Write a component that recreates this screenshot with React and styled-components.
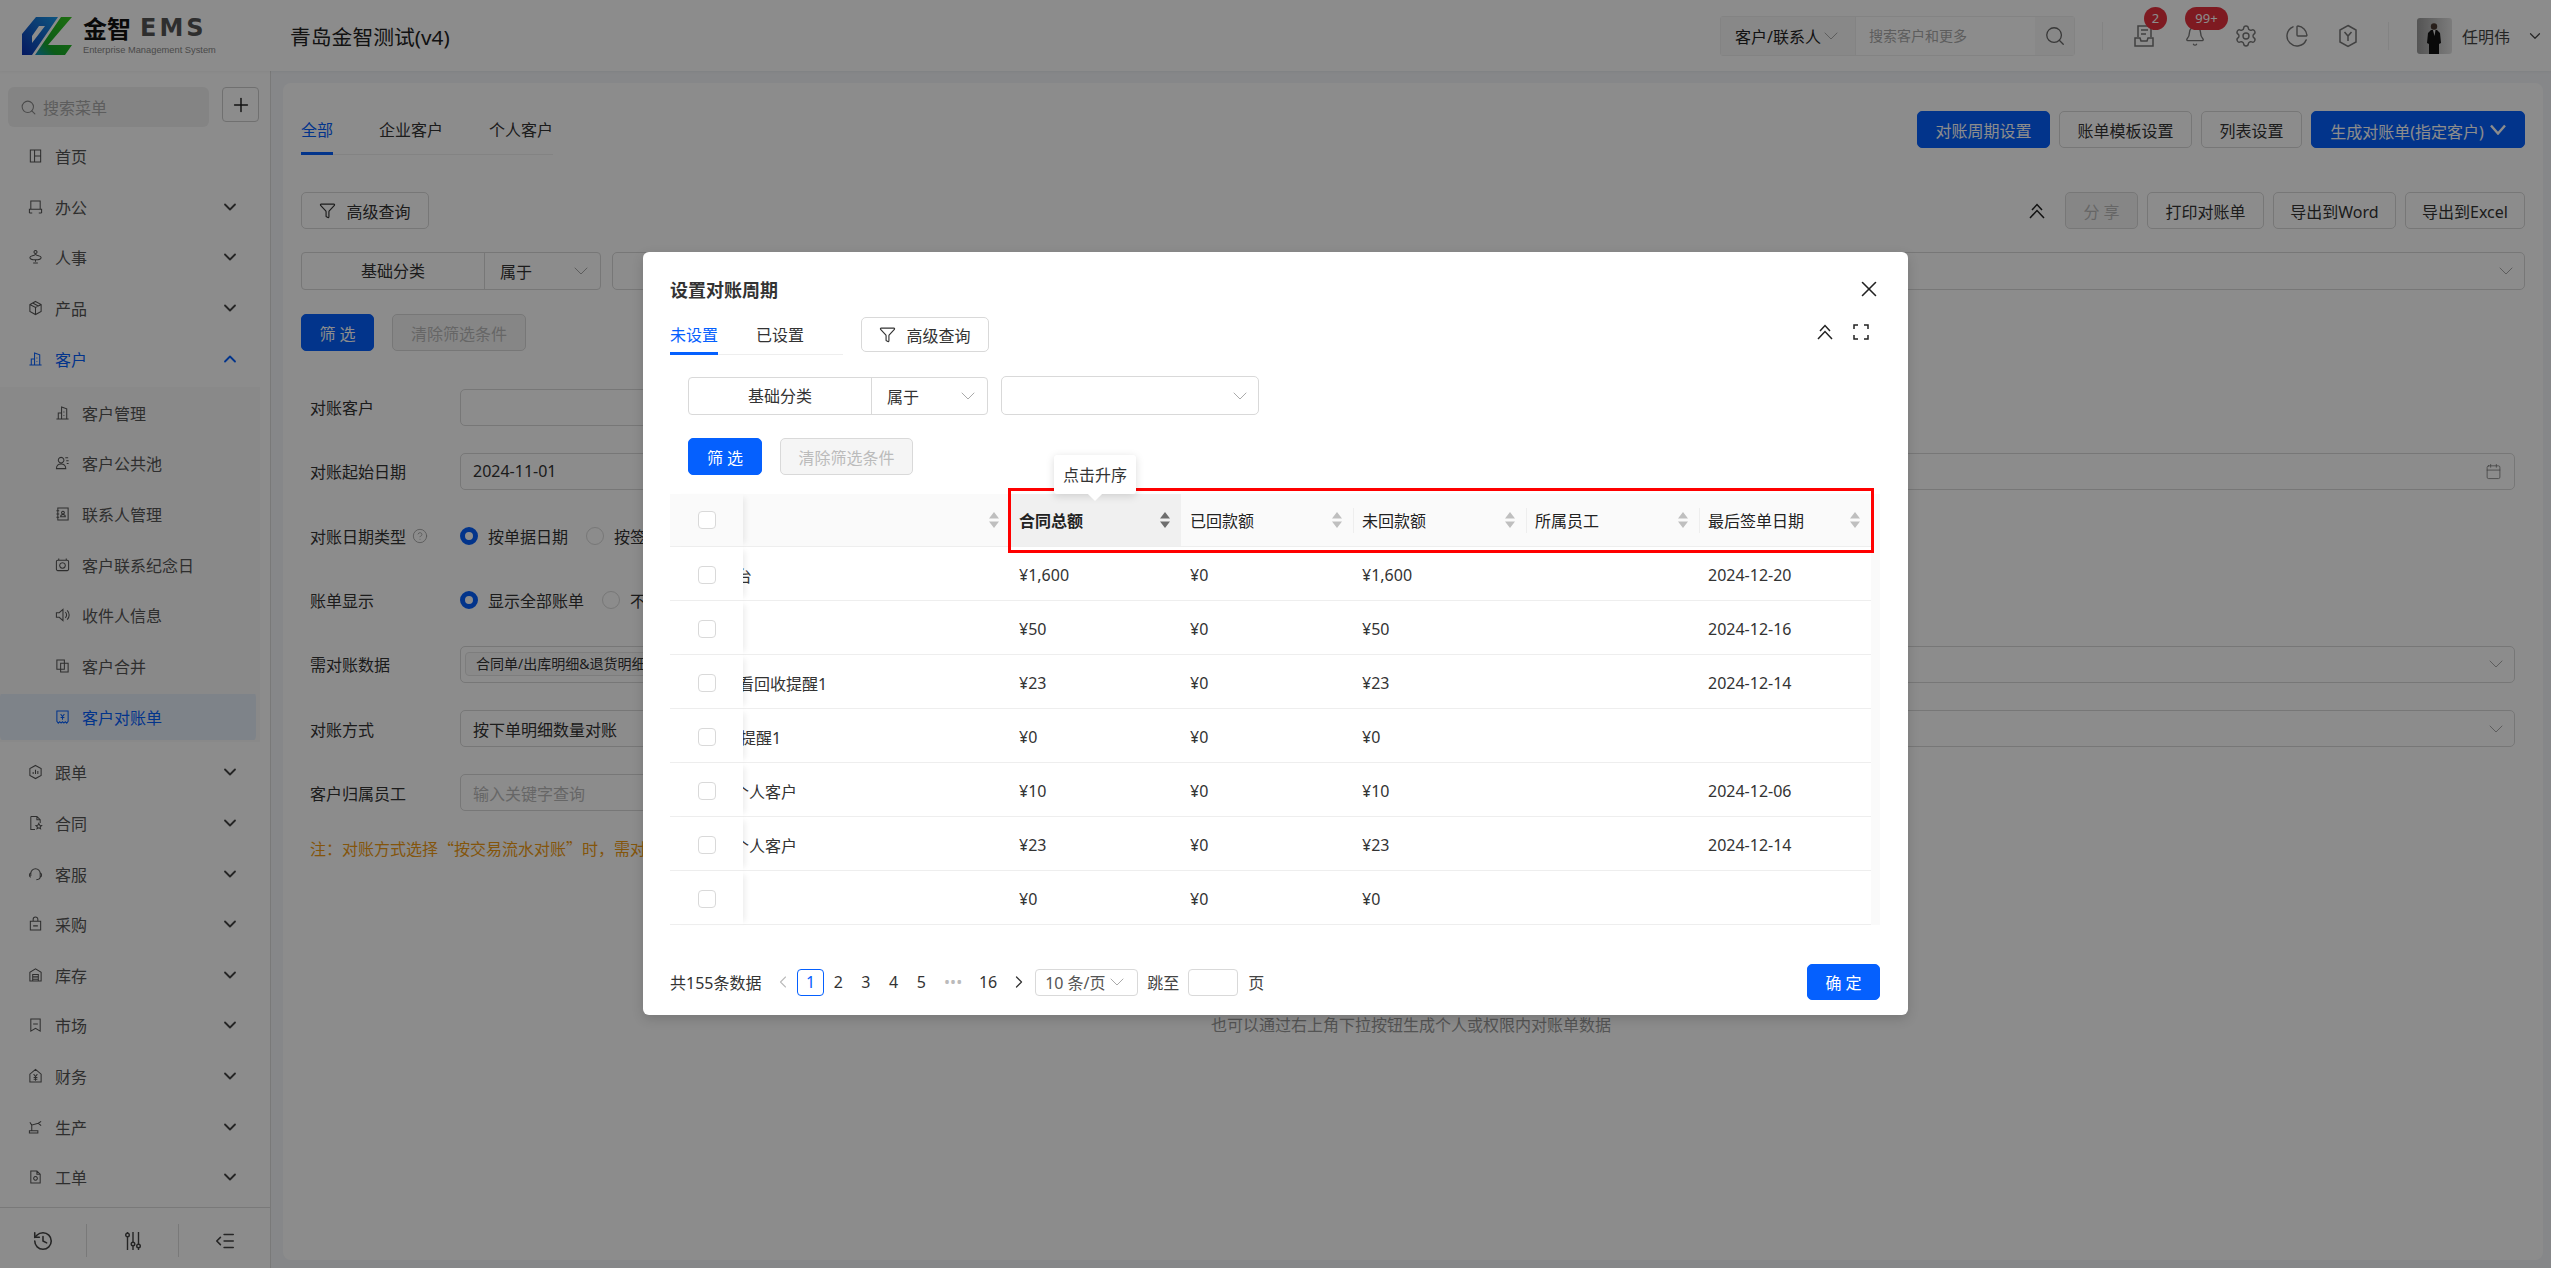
import React from 'react';
import styled, { createGlobalStyle } from 'styled-components';
import {
  Bell,
  Calendar,
  ChartPie,
  ChevronDown,
  ChevronLeft,
  ChevronRight,
  ChevronUp,
  CircleHelp,
  Funnel,
  History,
  IndentDecrease,
  Plus,
  Search,
  Settings,
  X,
} from 'lucide-react';

const BLUE = '#0560fe';
const FONT = '"Noto Sans", "Noto Sans CJK SC", sans-serif';

const GlobalStyle = createGlobalStyle`
  html, body {
    margin: 0;
    height: 100%;
    overflow: hidden;
    background: #fff;
    font-family: ${FONT};
    font-size: 16px;
    color: #333;
  }
  * { box-sizing: border-box; }
`;

const Page = styled.div`
  position: relative;
  width: 100%;
  height: 100vh;
  display: flex;
  flex-direction: column;
  overflow: hidden;
`;

/* top bar */
const Header = styled.header`
  height: 71px;
  flex: none;
  display: flex;
  align-items: center;
  padding-right: 7px;
  background: #fff;
  box-shadow: 0 1px 3px rgba(0, 0, 0, 0.05);
  position: relative;
  z-index: 1;
`;

const Logo = styled.div`
  width: 290px;
  flex: none;
  display: flex;
  padding-left: 22px;
  align-items: center;
  gap: 11px;
`;

const LogoText = styled.div`
  display: flex;
  flex-direction: column;
  gap: 4px;
`;

const LogoName = styled.div`
  display: flex;
  align-items: center;
  gap: 9px;
  height: 24px;
`;

const LogoCn = styled.span`
  font-family: "Noto Sans CJK SC", sans-serif;
  font-weight: 700;
  font-size: 24px;
  color: #111;
`;

const LogoEn = styled.span`
  font-family: "DejaVu Sans", sans-serif;
  font-weight: 700;
  font-size: 24px;
  letter-spacing: 3px;
  color: #555;
`;

const LogoSub = styled.div`
  font-family: "Liberation Sans", sans-serif;
  font-size: 9.3px;
  line-height: 12px;
  color: #888;
  white-space: nowrap;
`;

const CompanyTitle = styled.div`
  font-size: 20.8px;
  color: #222;
  flex: 1;
`;

const GlobalSearch = styled.div`
  width: 355px;
  height: 40px;
  display: flex;
  border: 1px solid #eee;
  border-radius: 3px;
`;

const SearchType = styled.div`
  width: 135px;
  display: flex;
  align-items: center;
  gap: 1px;
  padding-left: 14px;
  background: #f7f7f7;
  border-right: 1px solid #eee;
  color: #222;
  white-space: nowrap;
`;

const SearchHolder = styled.div`
  flex: 1;
  padding-left: 13px;
  font-size: 14px;
  line-height: 38px;
  color: #aaa;
`;

const SearchBtn = styled.div`
  width: 39px;
  display: flex;
  align-items: center;
  justify-content: center;
  background: #f7f7f7;
  color: #666;
`;

const VLine = styled.div`
  width: 1px;
  height: 28px;
  background: #eee;
  flex: none;
  margin: ${(p) => p.$margin};
`;

const HeadIcon = styled.div`
  position: relative;
  width: 51px;
  height: 40px;
  display: flex;
  align-items: center;
  justify-content: center;
  color: #777;
`;

const Badge = styled.span`
  position: absolute;
  top: -9px;
  left: ${(p) => p.$left}px;
  min-width: ${(p) => p.$w}px;
  height: 23px;
  border-radius: 12px;
  background: #e5303d;
  color: #fff;
  font-size: 13px;
  line-height: 23px;
  text-align: center;
`;

const Avatar = styled.svg`
  width: 35px;
  height: 36px;
  border-radius: 3px;
  flex: none;
`;

const UserName = styled.div`
  margin-left: 10px;
  width: 64px;
  color: #444;
`;

/* left menu */
const Body = styled.div`
  flex: 1;
  display: flex;
  min-height: 0;
`;

const Sidebar = styled.aside`
  width: 271px;
  flex: none;
  display: flex;
  flex-direction: column;
  border-right: 1px solid #dcdcdc;
  background: #fff;
`;

const MenuSearchRow = styled.div`
  display: flex;
  gap: 13px;
  padding: 16px 0 4px 8px;
  align-items: flex-start;
`;

const MenuSearch = styled.div`
  width: 201px;
  height: 40px;
  border-radius: 6px;
  background: #f1f1f1;
  display: flex;
  align-items: center;
  gap: 6px;
  padding-left: 12px;
  color: #aaa;
`;

const AddBtn = styled.div`
  width: 37px;
  height: 35px;
  border: 1px solid #ccc;
  border-radius: 4px;
  display: flex;
  align-items: center;
  justify-content: center;
  color: #222;
`;

const MenuList = styled.nav`
  flex: 1;
  overflow: hidden;
`;

const MenuRow = styled.div`
  height: 50.6px;
  display: flex;
  align-items: center;
  padding: 0 30px 0 28px;
  gap: 12px;
  color: ${(p) => (p.$open ? BLUE : '#555')};
`;

const MenuLabel = styled.span`
  flex: 1;
`;

const Caret = styled.span`
  display: flex;
  color: ${(p) => (p.$open ? BLUE : '#444')};
`;

const SubMenu = styled.div`
  width: 260px;
  margin: 3.4px 0 5px;
  background: #f9f9f9;
`;

const SubRow = styled.div`
  height: 50.7px;
  display: flex;
  align-items: center;
  gap: 12px;
  padding-left: 55px;
  width: 256px;
  border-radius: 6px;
  color: ${(p) => (p.$active ? BLUE : '#555')};
  background: ${(p) =>
    p.$active ? 'linear-gradient(transparent 0 3px, #e6effa 3px 49px, transparent 49px)' : 'none'};
`;

const IconSvg = styled.svg`
  width: 15px;
  height: 16px;
  flex: none;
  fill: none;
  stroke: currentColor;
  stroke-width: 1.1;
`;

const SideFooter = styled.div`
  height: 61px;
  flex: none;
  display: grid;
  grid-template-columns: 87px 92px 1fr;
  align-items: center;
  border-top: 1px solid #ddd;
`;

const FootTool = styled.div`
  height: 33px;
  margin-top: 5px;
  display: flex;
  align-items: center;
  justify-content: center;
  color: #444;
  border-right: ${(p) => (p.$last ? 'none' : '1px solid #ddd')};
`;

/* page behind the dialog */
const Main = styled.main`
  flex: 1;
  min-width: 0;
  background: #f4f6fa;
  padding: 12px 8px 8px 12px;
`;

const Card = styled.section`
  height: 100%;
  background: #fff;
  border-radius: 8px;
  padding: 28px 18px 0;
  position: relative;
`;

const TopRow = styled.div`
  display: flex;
  justify-content: space-between;
  align-items: flex-start;
`;

const Tabs = styled.div`
  display: flex;
  gap: ${(p) => p.$gap}px;
  height: ${(p) => p.$h}px;
  width: ${(p) => p.$w}px;
  border-bottom: 1px solid #eee;
`;

const Tab = styled.div`
  height: calc(100% + 1px);
  line-height: ${(p) => p.$line}px;
  white-space: nowrap;
  color: ${(p) => (p.$active ? BLUE : '#333')};
  border-bottom: 3px solid ${(p) => (p.$active ? BLUE : 'transparent')};
`;

const ToolGroup = styled.div`
  display: flex;
  align-items: center;
  gap: 9px;
`;

const Button = styled.div`
  height: ${(p) => p.$h || 37}px;
  width: ${(p) => p.$w}px;
  flex: none;
  display: flex;
  align-items: center;
  justify-content: center;
  gap: 6px;
  border-radius: 5px;
  white-space: nowrap;
  border: 1px solid ${(p) => (p.$primary ? BLUE : '#d9d9d9')};
  background: ${(p) => (p.$primary ? BLUE : p.$disabled ? '#f5f5f5' : '#fff')};
  color: ${(p) => (p.$primary ? '#fff' : p.$disabled ? '#bbb' : '#333')};
`;

const DropLabel = styled.span`
  margin-top: 3px;
`;

const DropArrow = styled.svg`
  flex: none;
  fill: none;
  stroke: #fff;
  stroke-width: 2.4;
`;

const ActionRow = styled.div`
  margin-top: ${(p) => p.$top}px;
  display: flex;
  justify-content: space-between;
  align-items: center;
`;

const ButtonPair = styled.div`
  display: flex;
  gap: 18px;
  margin-top: ${(p) => p.$top}px;
`;

const CollapseIcon = styled.div`
  display: flex;
  width: 26px;
  margin-right: 6px;
  justify-content: center;
  color: #222;
`;

const FilterRow = styled.div`
  display: flex;
  gap: 11px;
  margin-top: ${(p) => p.$top}px;
  align-items: center;
`;

const FilterField = styled.div`
  display: flex;
  flex: none;
  height: 38px;
  border: 1px solid #d9d9d9;
  border-radius: 4px;
`;

const FieldName = styled.div`
  width: 183px;
  text-align: center;
  line-height: 36px;
  border-right: 1px solid #d9d9d9;
`;

const FieldOp = styled.div`
  width: 115px;
  padding: 0 10px 0 15px;
  display: flex;
  align-items: center;
  justify-content: space-between;
  color: #333;
`;

const Select = styled.div`
  flex: ${(p) => (p.$w ? 'none' : 1)};
  width: ${(p) => (p.$w ? `${p.$w}px` : 'auto')};
  height: ${(p) => p.$h || 38}px;
  border: 1px solid #d9d9d9;
  border-radius: 5px;
  padding: 0 9px;
  display: flex;
  align-items: center;
  justify-content: space-between;
  color: #bbb;
`;

const Form = styled.div`
  margin-top: 24px;
  padding: 0 10px 0 9px;
`;

const FormRow = styled.div`
  height: 64.3px;
  display: flex;
  align-items: center;
`;

const FormLabel = styled.div`
  width: 150px;
  flex: none;
  display: flex;
  align-items: center;
  gap: 6px;
  color: #333;
`;

const HelpMark = styled.span`
  display: flex;
  color: #999;
`;

const FormBox = styled.div`
  flex: ${(p) => (p.$w ? 'none' : 1)};
  width: ${(p) => (p.$w ? `${p.$w}px` : 'auto')};
  height: ${(p) => p.$h || 37}px;
  border: 1px solid #d9d9d9;
  border-radius: 5px;
  padding: 0 ${(p) => p.$pad ?? 12}px 0 ${(p) => p.$padLeft ?? 12}px;
  display: flex;
  align-items: center;
  justify-content: space-between;
  color: ${(p) => (p.$holder ? '#bbb' : '#333')};
  white-space: nowrap;
  overflow: hidden;
`;

const ChevronGrey = styled.span`
  display: flex;
  margin: 0 -3px;
  color: #aaa;
`;

const Tag = styled.span`
  height: 24px;
  padding: 0 10px;
  border: 1px solid #e4e4e4;
  border-radius: 4px;
  background: #fafafa;
  font-size: 14px;
  line-height: 22px;
`;

const RadioGroup = styled.div`
  display: flex;
  align-items: center;
  gap: 10px;
`;

const Radio = styled.span`
  width: 18px;
  height: 18px;
  flex: none;
  border-radius: 50%;
  background: #fff;
  border: ${(p) => (p.$on ? `5px solid ${BLUE}` : '1px solid #d9d9d9')};
`;

const RadioText = styled.span`
  margin-right: ${(p) => p.$gap}px;
  white-space: nowrap;
`;

const Note = styled.div`
  margin: 11px 0 0 9px;
  font-family: "Noto Sans CJK SC", sans-serif;
  line-height: 24px;
  color: #f09b14;
`;

const EmptyHint = styled.div`
  position: absolute;
  left: 928px;
  top: 930px;
  line-height: 24px;
  color: #999;
  white-space: nowrap;
`;

/* dialog */
const Mask = styled.div`
  position: absolute;
  inset: 0;
  z-index: 10;
  background: rgba(0, 0, 0, 0.45);
  display: flex;
  justify-content: center;
  align-items: flex-start;
  padding-top: 252px;
`;

const Modal = styled.div`
  position: relative;
  width: 1265px;
  height: 763px;
  padding: 24px 28px 23px 27px;
  background: #fff;
  border-radius: 6px;
  box-shadow: 0 4px 12px rgba(0, 0, 0, 0.15);
`;

const ModalTitle = styled.div`
  font-size: 18px;
  font-weight: 700;
  line-height: 28px;
  color: #333;
`;

const CloseBtn = styled.div`
  position: absolute;
  top: 24px;
  right: 26px;
  display: flex;
  color: #222;
`;

const ModalTabRow = styled.div`
  margin-top: 13px;
  display: flex;
  align-items: flex-start;
  gap: 18px;
`;

const ModalTools = styled.div`
  margin-left: auto;
  margin-right: 11px;
  margin-top: 7px;
  display: flex;
  gap: 20px;
  color: #222;
`;

const Indented = styled.div`
  padding-left: 18px;
`;

const ModalFilter = styled.div`
  margin-top: 21px;
  display: flex;
  gap: 13px;
  align-items: center;
`;

const TableWrap = styled.div`
  position: relative;
  margin-top: 19px;
  padding-bottom: 8px;
`;

const Row = styled.div`
  display: grid;
  grid-template-columns: 73px 267px 171px 172px 173px 173px 172px 9px;
  height: ${(p) => (p.$head ? 53 : 54)}px;
`;

const HeadCell = styled.div`
  position: relative;
  display: flex;
  align-items: center;
  justify-content: space-between;
  padding: 0 11px 0 9px;
  background: ${(p) => (p.$sorted ? '#f0f0f0' : '#fafafa')};
  border-bottom: 1px solid #eee;
  font-weight: ${(p) => (p.$sorted ? 700 : 400)};
  color: #222;

  &::before {
    content: '';
    display: ${(p) => (p.$sep ? 'block' : 'none')};
    position: absolute;
    left: 0;
    top: 14px;
    height: 25px;
    width: 1px;
    background: #eee;
  }
`;

const Cell = styled.div`
  display: flex;
  align-items: center;
  padding: 3px 9px 0;
  border-bottom: 1px solid #eee;
  color: #333;
  white-space: nowrap;
  overflow: hidden;
`;

const CheckCell = styled.div`
  position: relative;
  z-index: 1;
  display: flex;
  align-items: center;
  padding: ${(p) => (p.$head ? 0 : 3)}px 0 0 28px;
  background: ${(p) => (p.$head ? '#fafafa' : '#fff')};
  border-bottom: 1px solid #eee;
  box-shadow: 6px 0 6px -4px rgba(0, 0, 0, 0.08);
`;

const Check = styled.span`
  width: 18px;
  height: 18px;
  border: 1px solid #d9d9d9;
  border-radius: 4px;
  background: #fff;
`;

const NameText = styled.span`
  margin-left: ${(p) => p.$shift}px;
`;

const NameCell = styled(Cell)`
  padding-left: 0;
  padding-right: 0;
`;

const Gutter = styled.div`
  background: #fafafa;
`;

const LeftShade = styled.div`
  height: 8px;
  width: 73px;
  box-shadow: 6px 0 6px -4px rgba(0, 0, 0, 0.08);
`;

const SortSvg = styled.svg`
  width: 10px;
  height: 16px;
  flex: none;
  fill: ${(p) => (p.$on ? '#6e6e6e' : '#bfbfbf')};
`;

const RedBox = styled.div`
  position: absolute;
  left: 338px;
  top: -6px;
  width: 866px;
  height: 65px;
  border: 3px solid #f00;
  z-index: 2;
`;

const Tooltip = styled.div`
  position: absolute;
  left: 384px;
  top: -39px;
  width: 82px;
  height: 39px;
  z-index: 3;
  background: #fff;
  border-radius: 3px;
  box-shadow: 0 2px 8px rgba(0, 0, 0, 0.15);
  text-align: center;
  line-height: 41px;
  color: #333;

  &::after {
    content: '';
    position: absolute;
    left: 36px;
    bottom: -5px;
    width: 10px;
    height: 10px;
    background: #fff;
    transform: rotate(45deg);
  }
`;

const Footer = styled.div`
  margin-top: 23px;
  height: 36px;
  display: flex;
  align-items: center;
`;

const Total = styled.span`
  width: 99px;
  white-space: nowrap;
  flex: none;
`;

const PageItem = styled.span`
  width: ${(p) => p.$w || 27.7}px;
  height: 27px;
  flex: none;
  display: flex;
  align-items: center;
  justify-content: center;
  border: 1px solid ${(p) => (p.$active ? BLUE : 'transparent')};
  border-radius: 4px;
  color: ${(p) => (p.$active ? BLUE : p.$muted ? '#bbb' : '#333')};
`;

const PageSize = styled.div`
  width: 103px;
  height: 27px;
  margin-left: 2px;
  border: 1px solid #d9d9d9;
  border-radius: 4px;
  padding: 0 11px 0 9px;
  display: flex;
  align-items: center;
  justify-content: space-between;
  color: #555;
  white-space: nowrap;
`;

const JumpText = styled.span`
  margin-left: ${(p) => p.$left}px;
  white-space: nowrap;
  color: #444;
`;

const JumpInput = styled.div`
  width: 50px;
  height: 27px;
  margin-left: 9px;
  border: 1px solid #d9d9d9;
  border-radius: 4px;
`;

const OkWrap = styled.div`
  margin-left: auto;
`;

const DIALOG_ROWS = [
  { name: '平台', shift: -23, total: '¥1,600', back: '¥0', left: '¥1,600', date: '2024-12-20' },
  { name: '', shift: 0, total: '¥50', back: '¥0', left: '¥50', date: '2024-12-16' },
  { name: '查看回收提醒1', shift: -21, total: '¥23', back: '¥0', left: '¥23', date: '2024-12-14' },
  { name: '提醒1', shift: -3, total: '¥0', back: '¥0', left: '¥0', date: '' },
  { name: '个人客户', shift: -10, total: '¥10', back: '¥0', left: '¥10', date: '2024-12-06' },
  { name: '个人客户', shift: -10, total: '¥23', back: '¥0', left: '¥23', date: '2024-12-14' },
  { name: '', shift: 0, total: '¥0', back: '¥0', left: '¥0', date: '' },
];

const ICONS = {
  home: 'M2.5 1.5h11v13h-11z M7 1.5v13 M7 8h6.5',
  office: 'M3 1.5h10v9H3z M1.5 14.5v-4h13v4 M1.5 14.5h3 M11.5 14.5h3',
  person: 'M8 1a1.6 1.6 0 1 0 .01 0 M8 5c-1 2-6 1.5-6 3.5S6 11 8 11s6-.5 6-2.5S9 7 8 5 M8 11v2 M5.5 14.5h5',
  box: 'M8 1l6 3.2v7.6L8 15l-6-3.2V4.2z M2 4.2L8 7.5l6-3.3 M8 7.5V15 M5 2.6l6 3.3',
  building: 'M1.5 14.5h13 M3.5 14.5V8H7 M7 14.5V1.5l5.5 2v11 M9.5 6.5v1 M9.5 10v1',
  hexbars: 'M8 1l6 3.3v7.4L8 15l-6-3.3V4.3z M5.5 10V8 M8 10V5.5 M10.5 10V7',
  contract: 'M3 1h6.5L13 4.5V8 M9.5 1v3.5H13 M3 1v14h4.5 M11.5 8.5l1 2 2 .2-1.5 1.4.4 2-1.9-1-1.9 1 .4-2-1.5-1.4 2-.2z',
  service: 'M3 10V7.5a5 5 0 0 1 10 0V11 M3 6.5C2 7 1.5 8 1.5 9s.5 2 1.5 2.5 M13 6.5c1 .5 1.5 1.5 1.5 2.5s-.5 2-1.5 2.5 M13 11c0 2-2 3-4 3',
  bag: 'M2.5 5h11v9.5h-11z M5.5 5V3a2.5 2.5 0 0 1 5 0v2 M5.5 10h5',
  warehouse: 'M2 14.5V5l6-3.5L14 5v9.5z M5 14.5V7.5h6v7 M5 10h6 M5 12.5h6',
  bookmark: 'M3 1.5h10v13l-5-3-5 3z M5.5 7h5',
  finance: 'M8 1l6 5v8.5H2V6z M6 6l2 2.5L10 6 M8 8.5V13 M6 9.5h4 M6 11.5h4',
  robot: 'M1.5 14.5h9v-2.5h-9z M4 12V6l7-2 M4 6L2 3 M11 4l3-2 M11 4l3 2.5',
  ticket: 'M3 1.5h6.5L13 5v9.5H3z M9.5 1.5V5H13 M8 7.5a2 2 0 1 0 .01 0',
  group: 'M6.5 2a3 3 0 1 0 .01 0 M1.5 14c0-3 2-5 5-5s5 2 5 5z M11 2.5h3 M12 5.5h2.5 M12.5 8.5h2',
  contact: 'M3 1.5h11v13H3z M1.5 4.5h3 M1.5 8h3 M1.5 11.5h3 M8.5 5a1.5 1.5 0 1 0 .01 0 M6 11c0-1.5 1-2.5 2.5-2.5S11 9.5 11 11z',
  anniv: 'M3 3h10a1.5 1.5 0 0 1 1.5 1.5v8A1.5 1.5 0 0 1 13 14H3a1.5 1.5 0 0 1-1.5-1.5v-8A1.5 1.5 0 0 1 3 3z M4 3V1 M12 3V1 M8 5.5a3 3 0 1 0 .01 0',
  speaker: 'M1.5 5.5h3L8.5 2v12l-4-3.5h-3z M11 5a4 4 0 0 1 0 6 M13 3a7 7 0 0 1 0 10',
  merge: 'M2 1.5h8v10H2z M6 5h8v9.5H6z',
  bill: 'M2 1.5h12v11l-1.5 2-1.5-1.5-1.5 1.5L8 13l-1.5 1.5L5 13l-1.5 1.5L2 12.5z M6 5l2 2.5L10 5 M8 7.5V11 M6 8.5h4',
};

function MenuIcon({ name }) {
  return (
    <IconSvg viewBox="0 0 16 16">
      <path d={ICONS[name]} />
    </IconSvg>
  );
}

function SortIcon({ on }) {
  return (
    <SortSvg $on={on} viewBox="0 0 10 16">
      <path d="M5 0l5 6.5H0z M5 16L0 9.5h10z" />
    </SortSvg>
  );
}

function LogoMark() {
  return (
    <svg width="50" height="38" viewBox="0 0 50 38">
      <defs>
        <linearGradient id="logoBlue" x1="0" y1="1" x2="1" y2="0">
          <stop offset="0" stopColor="#0b2fb0" />
          <stop offset="1" stopColor="#1a9ae8" />
        </linearGradient>
        <linearGradient id="logoGreen" x1="0" y1="1" x2="1" y2="0">
          <stop offset="0" stopColor="#0f8fd0" />
          <stop offset="0.3" stopColor="#16a82a" />
          <stop offset="1" stopColor="#36c81e" />
        </linearGradient>
      </defs>
      <path fill="url(#logoBlue)" d="M0 17L14 0h22L10 38H0zM10 19v7L23 9h-6z" fillRule="evenodd" />
      <path fill="url(#logoGreen)" d="M50 0H39L13 38h30l7-10H26z" />
    </svg>
  );
}

function UserPhoto() {
  return (
    <Avatar viewBox="0 0 35 36">
      <defs>
        <linearGradient id="photoBg" x1="0" y1="0" x2="1" y2="0">
          <stop offset="0" stopColor="#9a9a9a" />
          <stop offset="1" stopColor="#e2e2e2" />
        </linearGradient>
      </defs>
      <rect width="35" height="36" fill="url(#photoBg)" />
      <circle cx="17" cy="8.5" r="3.2" fill="#4a3a32" />
      <path d="M11 15l3-3h6l3 3 1 10-2 1v10H12V26l-2-1z" fill="#111" />
      <path d="M16 12h2.5l-1 6z" fill="#ddd" />
    </Avatar>
  );
}

function InboxIcon() {
  return (
    <svg width="22" height="24" viewBox="0 0 22 24" fill="none" stroke="currentColor" strokeWidth="1.5">
      <path d="M5 13V2h11l2 2v9 M8 6h7 M8 10h5 M2 14h5l1 3h6l1-3h5v8H2z" />
    </svg>
  );
}

function HexYIcon() {
  return (
    <svg width="20" height="24" viewBox="0 0 20 24" fill="none" stroke="currentColor" strokeWidth="1.5">
      <path d="M10 1.5l8 4.5v12l-8 4.5L2 18V6z M6.5 8L10 12l3.5-4 M10 12v5" />
    </svg>
  );
}

function SliderTool() {
  return (
    <svg width="16" height="20" viewBox="0 0 16 20" fill="none" stroke="currentColor" strokeWidth="1.4">
      <path d="M2.5 6v13 M2.5 1v1 M8 1v10 M8 15v4 M13.5 1v12 M13.5 17v2" />
      <circle cx="2.5" cy="4" r="1.8" />
      <circle cx="8" cy="13" r="1.8" />
      <circle cx="13.5" cy="15" r="1.8" />
    </svg>
  );
}

function FullscreenIcon() {
  return (
    <svg width="16" height="16" viewBox="0 0 16 16" fill="none" stroke="currentColor" strokeWidth="1.5">
      <path d="M1 5V1h4 M11 1h4v4 M15 11v4h-4 M5 15H1v-4" />
    </svg>
  );
}

function DoubleUp() {
  return (
    <svg width="16" height="16" viewBox="0 0 16 16" fill="none" stroke="currentColor" strokeWidth="1.5">
      <path d="M3 7l5-5.5L13 7 M1 15l7-7.5 7 7.5" />
    </svg>
  );
}

function MenuGroup({ icon, label, open }) {
  return (
    <MenuRow $open={open}>
      <MenuIcon name={icon} />
      <MenuLabel>{label}</MenuLabel>
      {label !== '首页' && (
        <Caret $open={open}>
          {open ? <ChevronUp size={20} strokeWidth={2.2} /> : <ChevronDown size={20} strokeWidth={2.2} />}
        </Caret>
      )}
    </MenuRow>
  );
}

function SelectCaret() {
  return (
    <ChevronGrey>
      <ChevronDown size={24} strokeWidth={1} />
    </ChevronGrey>
  );
}

function Sidenav() {
  return (
    <Sidebar>
      <MenuSearchRow>
        <MenuSearch>
          <Search size={17} strokeWidth={1.5} color="#888" />
          搜索菜单
        </MenuSearch>
        <AddBtn>
          <Plus size={22} strokeWidth={1.6} />
        </AddBtn>
      </MenuSearchRow>
      <MenuList>
        <MenuGroup icon="home" label="首页" />
        <MenuGroup icon="office" label="办公" />
        <MenuGroup icon="person" label="人事" />
        <MenuGroup icon="box" label="产品" />
        <MenuGroup icon="building" label="客户" open />
        <SubMenu>
          <SubRow><MenuIcon name="building" />客户管理</SubRow>
          <SubRow><MenuIcon name="group" />客户公共池</SubRow>
          <SubRow><MenuIcon name="contact" />联系人管理</SubRow>
          <SubRow><MenuIcon name="anniv" />客户联系纪念日</SubRow>
          <SubRow><MenuIcon name="speaker" />收件人信息</SubRow>
          <SubRow><MenuIcon name="merge" />客户合并</SubRow>
          <SubRow $active><MenuIcon name="bill" />客户对账单</SubRow>
        </SubMenu>
        <MenuGroup icon="hexbars" label="跟单" />
        <MenuGroup icon="contract" label="合同" />
        <MenuGroup icon="service" label="客服" />
        <MenuGroup icon="bag" label="采购" />
        <MenuGroup icon="warehouse" label="库存" />
        <MenuGroup icon="bookmark" label="市场" />
        <MenuGroup icon="finance" label="财务" />
        <MenuGroup icon="robot" label="生产" />
        <MenuGroup icon="ticket" label="工单" />
      </MenuList>
      <SideFooter>
        <FootTool><History size={22} strokeWidth={1.7} /></FootTool>
        <FootTool><SliderTool /></FootTool>
        <FootTool $last><IndentDecrease size={22} strokeWidth={1.7} /></FootTool>
      </SideFooter>
    </Sidebar>
  );
}

function Background() {
  return (
    <Card>
      <TopRow>
        <Tabs $gap={46} $h={44} $w={252}>
          <Tab $active $line={38}>全部</Tab>
          <Tab $line={38}>企业客户</Tab>
          <Tab $line={38}>个人客户</Tab>
        </Tabs>
        <ToolGroup>
          <Button $primary $w={133}>对账周期设置</Button>
          <Button $w={133}>账单模板设置</Button>
          <Button $w={101}>列表设置</Button>
          <Button $primary $w={214}>
            <DropLabel>生成对账单(指定客户)</DropLabel>
            <DropArrow width="16" height="11" viewBox="0 0 16 11">
              <path d="M1 1.5l7 8 7-8" />
            </DropArrow>
          </Button>
        </ToolGroup>
      </TopRow>
      <ActionRow $top={37}>
        <Button $w={128}>
          <Funnel size={17} strokeWidth={1.6} />
          &nbsp;高级查询
        </Button>
        <ToolGroup>
          <CollapseIcon><DoubleUp /></CollapseIcon>
          <Button $disabled $w={73}>分 享</Button>
          <Button $w={117}>打印对账单</Button>
          <Button $w={123}>导出到Word</Button>
          <Button $w={120}>导出到Excel</Button>
        </ToolGroup>
      </ActionRow>
      <FilterRow $top={23}>
        <FilterField>
          <FieldName>基础分类</FieldName>
          <FieldOp>属于<SelectCaret /></FieldOp>
        </FilterField>
        <Select><span /><SelectCaret /></Select>
      </FilterRow>
      <ButtonPair $top={24}>
        <Button $primary $w={73}>筛 选</Button>
        <Button $disabled $w={134}>清除筛选条件</Button>
      </ButtonPair>
      <Form>
        <FormRow>
          <FormLabel>对账客户</FormLabel>
          <FormBox $w={400} />
        </FormRow>
        <FormRow>
          <FormLabel>对账起始日期</FormLabel>
          <FormBox>
            2024-11-01
            <HelpMark><Calendar size={17} strokeWidth={1.1} color="#777" /></HelpMark>
          </FormBox>
        </FormRow>
        <FormRow>
          <FormLabel>
            对账日期类型
            <HelpMark><CircleHelp size={16} strokeWidth={1.2} /></HelpMark>
          </FormLabel>
          <RadioGroup>
            <Radio $on />
            <RadioText $gap={8}>按单据日期</RadioText>
            <Radio />
            <RadioText $gap={0}>按签单日期</RadioText>
          </RadioGroup>
        </FormRow>
        <FormRow>
          <FormLabel>账单显示</FormLabel>
          <RadioGroup>
            <Radio $on />
            <RadioText $gap={8}>显示全部账单</RadioText>
            <Radio />
            <RadioText $gap={0}>不显示已结清账单</RadioText>
          </RadioGroup>
        </FormRow>
        <FormRow>
          <FormLabel>需对账数据</FormLabel>
          <FormBox $padLeft={4} $pad={9}>
            <Tag>合同单/出库明细&amp;退货明细</Tag>
            <SelectCaret />
          </FormBox>
        </FormRow>
        <FormRow>
          <FormLabel>对账方式</FormLabel>
          <FormBox $pad={9}>
            按下单明细数量对账
            <SelectCaret />
          </FormBox>
        </FormRow>
        <FormRow>
          <FormLabel>客户归属员工</FormLabel>
          <FormBox $w={400} $holder>输入关键字查询</FormBox>
        </FormRow>
      </Form>
      <Note>注：对账方式选择“按交易流水对账”时，需对账数据仅支持合同单及回款单</Note>
      <EmptyHint>也可以通过右上角下拉按钮生成个人或权限内对账单数据</EmptyHint>
    </Card>
  );
}

function Dialog() {
  return (
    <Modal>
      <ModalTitle>设置对账周期</ModalTitle>
      <CloseBtn><X size={26} strokeWidth={1.5} /></CloseBtn>
      <ModalTabRow>
        <Tabs $gap={38} $h={38} $w={173}>
          <Tab $active $line={36}>未设置</Tab>
          <Tab $line={36}>已设置</Tab>
        </Tabs>
        <Button $w={128} $h={35}>
          <Funnel size={17} strokeWidth={1.6} />
          &nbsp;高级查询
        </Button>
        <ModalTools>
          <DoubleUp />
          <FullscreenIcon />
        </ModalTools>
      </ModalTabRow>
      <Indented>
        <ModalFilter>
          <FilterField>
            <FieldName>基础分类</FieldName>
            <FieldOp>属于<SelectCaret /></FieldOp>
          </FilterField>
          <Select $w={258} $h={39}><span /><SelectCaret /></Select>
        </ModalFilter>
        <ButtonPair $top={23}>
          <Button $primary $w={74}>筛 选</Button>
          <Button $disabled $w={133}>清除筛选条件</Button>
        </ButtonPair>
      </Indented>
      <TableWrap>
        <Tooltip>点击升序</Tooltip>
        <RedBox />
        <Row $head>
          <CheckCell $head><Check /></CheckCell>
          <HeadCell><span /><SortIcon /></HeadCell>
          <HeadCell $sorted>合同总额<SortIcon on /></HeadCell>
          <HeadCell>已回款额<SortIcon /></HeadCell>
          <HeadCell $sep>未回款额<SortIcon /></HeadCell>
          <HeadCell $sep>所属员工<SortIcon /></HeadCell>
          <HeadCell $sep>最后签单日期<SortIcon /></HeadCell>
          <Gutter />
        </Row>
        {DIALOG_ROWS.map((row, i) => (
          <Row key={i}>
            <CheckCell><Check /></CheckCell>
            <NameCell><NameText $shift={row.shift}>{row.name}</NameText></NameCell>
            <Cell>{row.total}</Cell>
            <Cell>{row.back}</Cell>
            <Cell>{row.left}</Cell>
            <Cell />
            <Cell>{row.date}</Cell>
            <Gutter />
          </Row>
        ))}
        <LeftShade />
      </TableWrap>
      <Footer>
        <Total>共155条数据</Total>
        <PageItem $muted><ChevronLeft size={20} strokeWidth={1.3} /></PageItem>
        <PageItem $active>1</PageItem>
        <PageItem>2</PageItem>
        <PageItem>3</PageItem>
        <PageItem>4</PageItem>
        <PageItem>5</PageItem>
        <PageItem $w={36} $muted>•••</PageItem>
        <PageItem $w={34}>16</PageItem>
        <PageItem $w={28}><ChevronRight size={20} strokeWidth={1.5} /></PageItem>
        <PageSize>10 条/页<SelectCaret /></PageSize>
        <JumpText $left={9}>跳至</JumpText>
        <JumpInput />
        <JumpText $left={10}>页</JumpText>
        <OkWrap><Button $primary $w={73} $h={36}>确 定</Button></OkWrap>
      </Footer>
    </Modal>
  );
}

export default function App() {
  return (
    <Page>
      <GlobalStyle />
      <Header>
        <Logo>
          <LogoMark />
          <LogoText>
            <LogoName>
              <LogoCn>金智</LogoCn>
              <LogoEn>EMS</LogoEn>
            </LogoName>
            <LogoSub>Enterprise Management System</LogoSub>
          </LogoText>
        </Logo>
        <CompanyTitle>青岛金智测试(v4)</CompanyTitle>
        <GlobalSearch>
          <SearchType>客户/联系人<SelectCaret /></SearchType>
          <SearchHolder>搜索客户和更多</SearchHolder>
          <SearchBtn><Search size={22} strokeWidth={1.4} /></SearchBtn>
        </GlobalSearch>
        <VLine $margin="0 15px 0 27px" />
        <HeadIcon>
          <InboxIcon />
          <Badge $left={26} $w={23}>2</Badge>
        </HeadIcon>
        <HeadIcon>
          <Bell size={22} strokeWidth={1.5} />
          <Badge $left={16} $w={43}>99+</Badge>
        </HeadIcon>
        <HeadIcon><Settings size={24} strokeWidth={1.4} /></HeadIcon>
        <HeadIcon><ChartPie size={24} strokeWidth={1.4} /></HeadIcon>
        <HeadIcon><HexYIcon /></HeadIcon>
        <VLine $margin="0 28px 0 15px" />
        <UserPhoto />
        <UserName>任明伟</UserName>
        <ChevronDown size={18} strokeWidth={1.6} color="#444" />
      </Header>
      <Body>
        <Sidenav />
        <Main>
          <Background />
        </Main>
      </Body>
      <Mask>
        <Dialog />
      </Mask>
    </Page>
  );
}
